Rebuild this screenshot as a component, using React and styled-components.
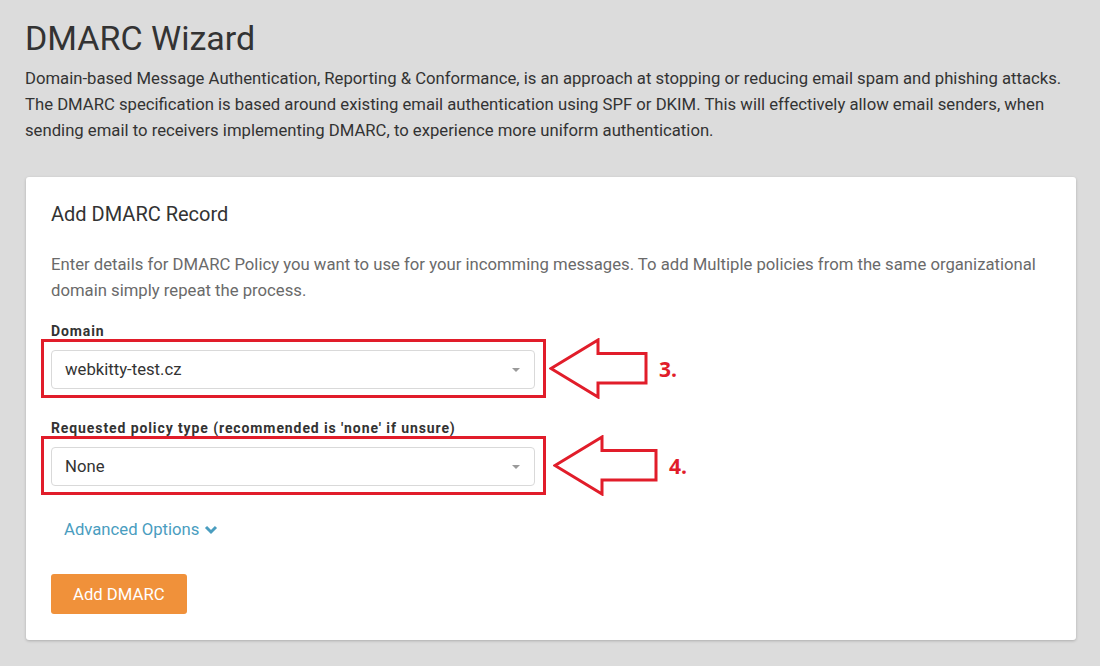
import React from 'react';
import styled, { createGlobalStyle } from 'styled-components';

const colors = {
  page: '#dcdcdc',
  text: '#333333',
  muted: '#6a6a6a',
  border: '#d9d9d9',
  link: '#4a9dbf',
  orange: '#f0913a',
  red: '#e11d2a',
};

const GlobalStyle = createGlobalStyle`
  html, body {
    margin: 0;
    padding: 0;
    background: ${colors.page};
    font-family: Roboto, "Liberation Sans", sans-serif;
    color: ${colors.text};
  }
  * { box-sizing: border-box; }
`;

const Page = styled.div`
  width: 1100px;
  height: 666px;
  overflow: hidden;
  padding: 18px 24px 0 25px;
  background: ${colors.page};
`;

const Title = styled.h1`
  margin: 0;
  font-size: 34px;
  font-weight: 400;
  line-height: 40px;
  color: ${colors.text};
`;

const Intro = styled.p`
  margin: 8px 0 0;
  font-size: 16.7px;
  line-height: 26px;
  color: ${colors.text};
`;

const Card = styled.div`
  margin: 33px 0 0 1px;
  padding: 25px 25px 26px;
  background: #ffffff;
  border-radius: 3px;
  box-shadow: 0 1px 3px rgba(0, 0, 0, 0.22);
`;

const CardTitle = styled.h2`
  margin: 0;
  font-size: 20px;
  font-weight: 400;
  line-height: 24px;
  color: ${colors.text};
`;

const Description = styled.p`
  margin: 26px 0 0;
  font-size: 16.7px;
  line-height: 26px;
  color: ${colors.muted};
`;

const Label = styled.div`
  margin-top: ${(p) => p.$top}px;
  font-size: 14px;
  font-weight: 700;
  letter-spacing: 0.9px;
  line-height: 15px;
  color: ${colors.text};
`;

const HighlightRow = styled.div`
  display: flex;
  align-items: center;
  margin-left: -10px;
`;

const HighlightBox = styled.div`
  width: 505px;
  padding: 8px 8px 6px 7px;
  border: 3px solid ${colors.red};
`;

const Select = styled.div`
  display: flex;
  align-items: center;
  justify-content: space-between;
  height: 39px;
  padding: 0 14px 0 13px;
  border: 1px solid ${colors.border};
  border-radius: 4px;
  font-size: 16.7px;
  color: ${colors.text};
`;

const Caret = styled.span`
  width: 0;
  height: 0;
  border-left: 4px solid transparent;
  border-right: 4px solid transparent;
  border-top: 4px solid #9a9a9a;
`;

const Arrow = styled.svg`
  display: block;
  flex: none;
  margin: -1px 0 -1px ${(p) => p.$gap}px;
`;

const StepNumber = styled.span`
  margin-left: 9px;
  font-family: "Open Sans", "Liberation Sans", sans-serif;
  font-size: 21px;
  font-weight: 700;
  line-height: 24px;
  color: ${colors.red};
`;

const AdvancedLink = styled.a`
  display: inline-flex;
  align-items: center;
  gap: 5px;
  margin: 23px 0 0 13px;
  font-size: 16.7px;
  line-height: 24px;
  color: ${colors.link};
  text-decoration: none;
`;

const Actions = styled.div`
  margin-top: 32px;
`;

const Button = styled.button`
  display: block;
  height: 40px;
  padding: 0 22px;
  border: none;
  border-radius: 3px;
  background: ${colors.orange};
  color: #ffffff;
  font-family: Roboto, "Liberation Sans", sans-serif;
  font-size: 16.7px;
`;

function HighlightArrow({ gap, width }) {
  const w = width;
  const head = 49;
  return (
    <Arrow $gap={gap} width={w + 4} height={61} viewBox={`0 0 ${w + 4} 61`}>
      <polygon
        points={`2,30.5 ${head},2 ${head},15.5 ${w},15.5 ${w},45 ${head},45 ${head},59`}
        fill="none"
        stroke={colors.red}
        strokeWidth="3"
      />
    </Arrow>
  );
}

function HighlightedSelect({ value, step, gap, width }) {
  return (
    <HighlightRow>
      <HighlightBox>
        <Select>
          <span>{value}</span>
          <Caret />
        </Select>
      </HighlightBox>
      <HighlightArrow gap={gap} width={width} />
      <StepNumber>{step}</StepNumber>
    </HighlightRow>
  );
}

export default function App() {
  return (
    <Page>
      <GlobalStyle />
      <Title>DMARC Wizard</Title>
      <Intro>
        Domain-based Message Authentication, Reporting &amp; Conformance, is an approach at stopping or reducing email spam and phishing attacks.
        The DMARC specification is based around existing email authentication using SPF or DKIM. This will effectively allow email senders, when
        sending email to receivers implementing DMARC, to experience more uniform authentication.
      </Intro>
      <Card>
        <CardTitle>Add DMARC Record</CardTitle>
        <Description>
          Enter details for DMARC Policy you want to use for your incomming messages. To add Multiple policies from the same organizational
          domain simply repeat the process.
        </Description>
        <Label $top={20}>Domain</Label>
        <HighlightedSelect value="webkitty-test.cz" step="3." gap={3} width={97} />
        <Label $top={23}>Requested policy type (recommended is 'none' if unsure)</Label>
        <HighlightedSelect value="None" step="4." gap={7} width={103} />
        <AdvancedLink href="#">
          Advanced Options
          <svg width="14" height="10" viewBox="0 0 14 10">
            <polyline points="2,2 7,7 12,2" fill="none" stroke={colors.link} strokeWidth="3" />
          </svg>
        </AdvancedLink>
        <Actions>
          <Button>Add DMARC</Button>
        </Actions>
      </Card>
    </Page>
  );
}
